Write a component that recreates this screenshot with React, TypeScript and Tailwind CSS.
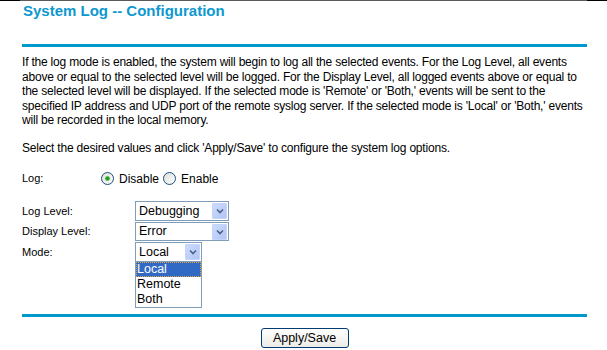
import React from "react";

function Radio({ checked, id }: { checked?: boolean; id: string }) {
  return (
    <svg width="13" height="13" viewBox="0 0 13 13" className="shrink-0">
      <defs>
        <linearGradient id={id} x1="0" y1="0" x2="1" y2="1">
          <stop offset="0" stopColor="#dcdcd7" />
          <stop offset="1" stopColor="#ffffff" />
        </linearGradient>
      </defs>
      <circle cx="6.5" cy="6.5" r="6" fill={`url(#${id})`} stroke="#1c5180" strokeWidth="1" />
      {checked && <circle cx="6.5" cy="6.5" r="2.3" fill="#21a121" />}
    </svg>
  );
}

function Arrow() {
  return (
    <div className="w-[15px] h-[16px] bg-gradient-to-br from-[#cddcfc] to-[#afc5f4] border border-[#c3d3fd] rounded-[1px] flex items-center justify-center">
      <svg width="8" height="6" viewBox="0 0 8 6">
        <path d="M1 1.5 L4 4.5 L7 1.5" fill="none" stroke="#4d6185" strokeWidth="1.6" />
      </svg>
    </div>
  );
}

function Select({ value, w, h }: { value: string; w: string; h: string }) {
  return (
    <div className={`${w} ${h} border border-[#7f9db9] bg-white flex items-center justify-between pl-[3px] pr-[1px]`}>
      <span className="text-[12.5px] text-black leading-none">{value}</span>
      <Arrow />
    </div>
  );
}

export default function App() {
  return (
    <div className="w-[607px] h-[350px] bg-white overflow-hidden" style={{ fontFamily: '"Liberation Sans", Arial, sans-serif' }}>
      <div className="flex h-[1px]">
        <div className="w-[20px] bg-black" />
        <div className="flex-1 bg-[#5a5a5a]" />
        <div className="w-[20px] bg-black" />
      </div>
      <div className="ml-[22px] w-[565px]">
        <div className="text-[15px] font-bold text-[#0d99cf] pt-[1px] leading-[18px] pl-[1px]">System Log -- Configuration</div>
        <div className="h-[3px] bg-[#0099cc] mt-[24px]" />
        <div className="text-[12px] leading-[14.5px] text-black mt-[8px] tracking-[-0.2px]">
          If the log mode is enabled, the system will begin to log all the selected events. For the Log Level, all events above or equal to the selected level will be logged. For the Display Level, all logged events above or equal to the selected level will be displayed. If the selected mode is 'Remote' or 'Both,' events will be sent to the specified IP address and UDP port of the remote syslog server. If the selected mode is 'Local' or 'Both,' events will be recorded in the local memory.
        </div>
        <div className="text-[12px] leading-[14.5px] text-black mt-[13px] tracking-[-0.2px]">
          Select the desired values and click 'Apply/Save' to configure the system log options.
        </div>
        <div className="flex items-center mt-[17px] text-[12px] h-[13px]">
          <div className="w-[79px] text-[11px]">Log:</div>
          <Radio checked id="r1" />
          <span className="ml-[5px] mr-[4px]">Disable</span>
          <Radio id="r2" />
          <span className="ml-[5px]">Enable</span>
        </div>
        <div className="mt-[16px] flex flex-col gap-[1px] text-[11px]">
          <div className="flex items-center">
            <div className="w-[113px]">Log Level:</div>
            <Select value="Debugging" w="w-[94px]" h="h-[20px]" />
          </div>
          <div className="flex items-center">
            <div className="w-[113px]">Display Level:</div>
            <Select value="Error" w="w-[94px]" h="h-[19px]" />
          </div>
          <div className="flex items-start">
            <div className="w-[113px] leading-[20px]">Mode:</div>
            <div className="flex flex-col">
              <Select value="Local" w="w-[67px]" h="h-[20px]" />
              <div className="w-[67px] border border-[#7f9db9] border-t-0 bg-white text-[12.5px] leading-[15px]">
                <div className="bg-[#316ac5] text-white pl-[1px] outline outline-1 outline-dotted outline-[#e8a33d] -outline-offset-1">Local</div>
                <div className="pl-[1px]">Remote</div>
                <div className="pl-[1px]">Both</div>
              </div>
            </div>
          </div>
        </div>
        <div className="h-[3px] bg-[#0099cc] mt-[6px]" />
        <div className="flex justify-center mt-[11px]">
          <button className="w-[88px] h-[20px] border border-[#003c74] rounded-[3px] bg-gradient-to-b from-white to-[#ecebe6] text-[12.5px] leading-none text-black">Apply/Save</button>
        </div>
      </div>
    </div>
  );
}
